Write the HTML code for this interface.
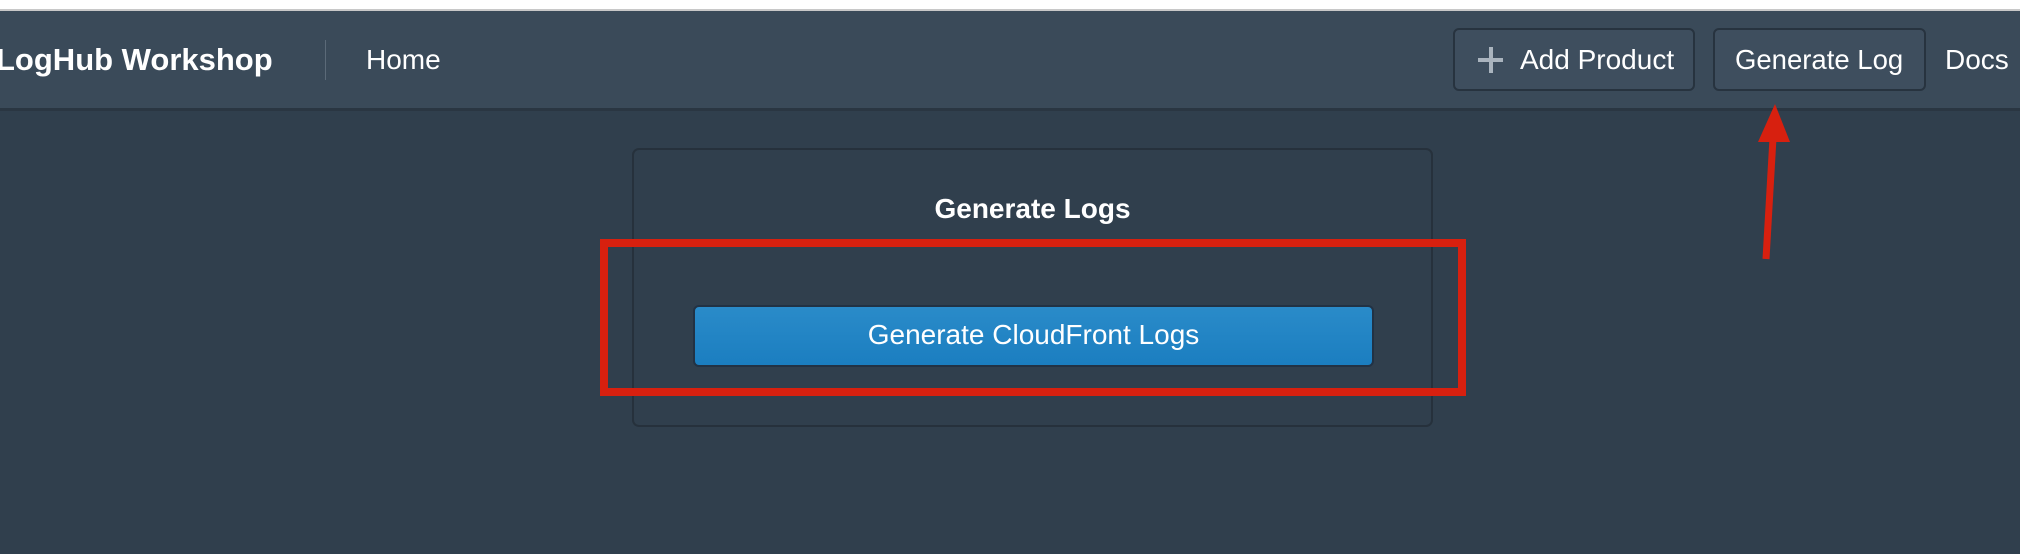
<!DOCTYPE html>
<html><head><style>
body{margin:0;width:2020px;height:554px;background:#303f4d;font-family:"Liberation Sans",sans-serif;position:relative;overflow:hidden;color:#fff}
.top{position:absolute;left:0;top:0;width:2020px;height:9px;background:#fff;border-bottom:2px solid #c8c8c8}
.hdr{position:absolute;left:0;top:11px;width:2020px;height:97px;background:#3a4a59;border-bottom:3px solid #2a3642}
.t{position:absolute;white-space:nowrap}
.btn{position:absolute;border:2px solid #27333f;border-radius:6px;background:#3e4e5e;box-sizing:border-box}
</style></head><body>
<div class="top"></div>
<div class="hdr"></div>
<div class="t" style="left:-4px;top:42px;font-size:31px;font-weight:bold">LogHub Workshop</div>
<div style="position:absolute;left:325px;top:40px;width:1px;height:40px;background:#5b6a78"></div>
<div class="t" style="left:366px;top:44px;font-size:28px">Home</div>
<div class="btn" style="left:1453px;top:28px;width:242px;height:63px"></div>
<div style="position:absolute;left:1478px;top:58px;width:25px;height:4px;background:#aab4be"></div>
<div style="position:absolute;left:1489px;top:47px;width:4px;height:26px;background:#aab4be"></div>
<div class="t" style="left:1520px;top:44px;font-size:28px">Add Product</div>
<div class="btn" style="left:1713px;top:28px;width:213px;height:63px"></div>
<div class="t" style="left:1735px;top:44px;font-size:27.5px">Generate Log</div>
<div class="t" style="left:1945px;top:44px;font-size:28px">Docs</div>
<div style="position:absolute;left:632px;top:148px;width:801px;height:279px;border:2px solid #26313c;border-radius:7px;box-sizing:border-box"></div>
<div class="t" style="left:632px;width:801px;text-align:center;top:193px;font-size:28px;font-weight:bold">Generate Logs</div>
<div style="position:absolute;left:693px;top:305px;width:681px;height:62px;box-sizing:border-box;border:2px solid #223244;border-radius:6px;background:linear-gradient(#2a8bc9,#1b7ec0)"></div>
<div class="t" style="left:693px;width:681px;text-align:center;top:319px;font-size:28px">Generate CloudFront Logs</div>
<div style="position:absolute;left:600px;top:239px;width:866px;height:157px;border:8px solid #d7200f;box-sizing:border-box"></div>
<svg style="position:absolute;left:0;top:0" width="2020" height="554">
<line x1="1766" y1="259" x2="1773" y2="138" stroke="#d7200f" stroke-width="7"/>
<polygon points="1775,104 1758,142 1790,142" fill="#d7200f"/>
</svg>
</body></html>
